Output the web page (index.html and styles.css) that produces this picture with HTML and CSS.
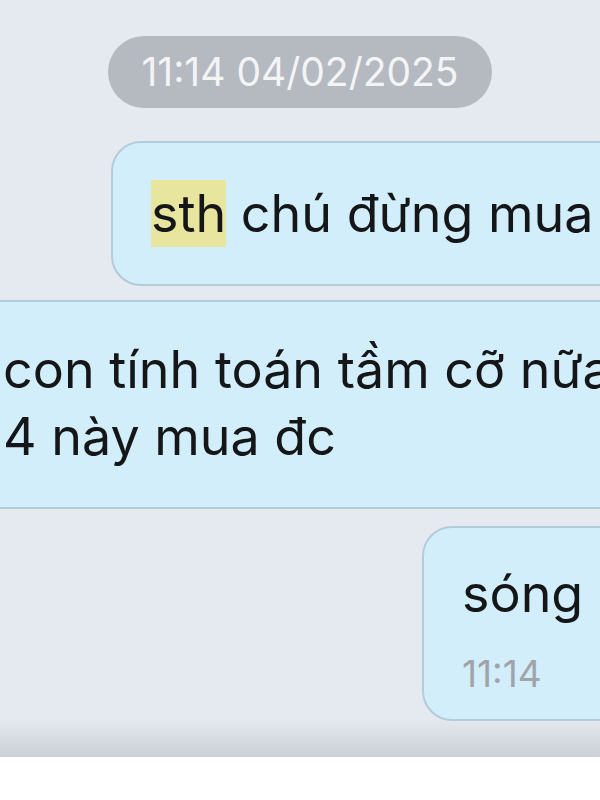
FILE: index.html
```html
<!DOCTYPE html>
<html lang="vi">
<head>
<meta charset="utf-8">
<link rel="stylesheet" href="styles.css">
</head>
<body>
<div class="screen">
  <div class="stamp">11:14 04/02/2025</div>
  <div class="bubble msg1"><span class="text"><span class="hl">sth</span> chú đừng mua</span></div>
  <div class="bubble msg2">
    <div class="text">con tính toán tầm cỡ nữa</div>
    <div class="text">4 này mua đc</div>
  </div>
  <div class="bubble msg3">
    <div class="text">sóng đ</div>
    <div class="time">11:14</div>
  </div>
</div>
<div class="bottom"></div>
</body>
</html>
```
FILE: styles.css
```css
html, body {
  margin: 0;
  padding: 0;
  background: #ffffff;
}
.screen {
  width: 600px;
  height: 757px;
  overflow: hidden;
  display: flex;
  flex-direction: column;
  background: linear-gradient(to bottom, #e5e9f0 0px, #e5e9f0 718px, #cbcfd6 757px);
  font-family: Inter, "Noto Sans", sans-serif;
  color: #141618;
}
.stamp {
  align-self: center;
  margin-top: 36px;
  height: 72px;
  line-height: 72px;
  padding: 0 33px;
  border-radius: 36px;
  background: #b5b9c0;
  color: #f3f4f6;
  font-size: 39px;
  white-space: nowrap;
}
.bubble {
  background: #d3eefb;
  border: 2px solid #b4ccd9;
  border-radius: 30px;
  box-sizing: border-box;
  flex-shrink: 0;
  white-space: nowrap;
}
.text {
  font-size: 52px;
  line-height: 67px;
}
.msg1 {
  margin-top: 33px;
  margin-left: 111px;
  width: 800px;
  height: 145px;
  padding: 37px 0 0 38px;
}
.hl {
  background: #e8e59e;
  padding: 2px 0;
}
.msg2 {
  margin-top: 14px;
  margin-left: -40px;
  width: 800px;
  height: 209px;
  padding: 34px 0 0 41px;
}
.msg3 {
  margin-top: 17px;
  margin-left: 422px;
  width: 500px;
  height: 195px;
  padding: 32px 0 0 38px;
}
.time {
  margin-top: 27px;
  font-size: 37px;
  line-height: 40px;
  color: #a0a4a9;
}
.bottom {
  height: 43px;
  background: #ffffff;
}
```
